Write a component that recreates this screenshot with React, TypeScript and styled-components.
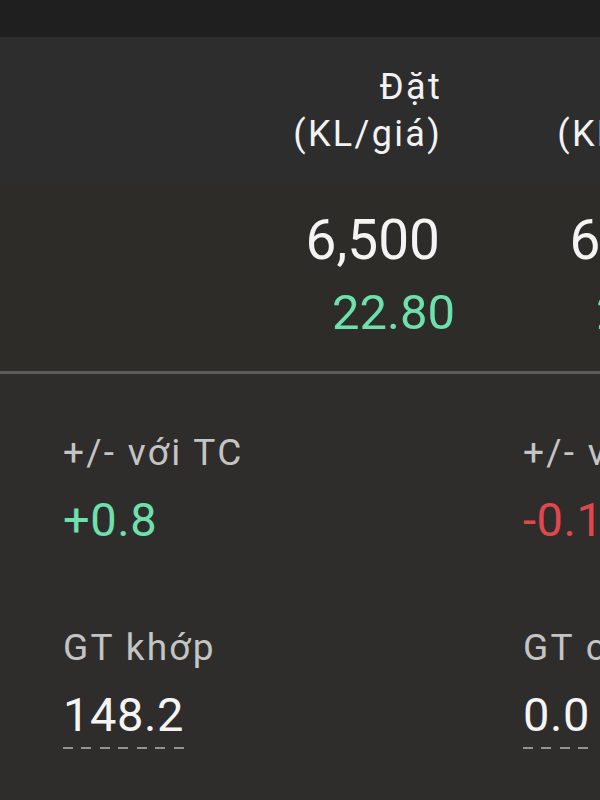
// App.tsx
import React from 'react';
import styled, { createGlobalStyle } from 'styled-components';

const GlobalStyle = createGlobalStyle`
  html, body {
    margin: 0;
    padding: 0;
    background: #2e2d2b;
  }
  body {
    font-family: Roboto, "Noto Sans", "Liberation Sans", sans-serif;
    -webkit-font-smoothing: antialiased;
  }
`;

const Screen = styled.div`
  width: 600px;
  height: 800px;
  overflow: hidden;
  display: flex;
  flex-direction: column;
  background: #2e2d2b;
`;

const StatusBar = styled.div`
  height: 37px;
  flex: none;
  background: #1f1f1f;
`;

const Board = styled.div`
  display: grid;
  grid-template-columns: 191px 264px 264px;
  width: 719px;
`;

const HeadCell = styled.div`
  height: 148px;
  padding: 27px 13px 0 0;
  box-sizing: border-box;
  background: #2d2d2d;
  color: #f2f2f2;
  font-size: 36px;
  line-height: 47px;
  letter-spacing: 2.3px;
  text-align: right;
  white-space: nowrap;
`;

const ValueCell = styled.div`
  height: 186px;
  padding-top: 23px;
  box-sizing: border-box;
  background: #2d2c29;
  display: flex;
  flex-direction: column;
  align-items: flex-end;
  gap: 11px;
  white-space: nowrap;
`;

const Volume = styled.div`
  padding-right: 15px;
  color: #f4f4f4;
  font-size: 55px;
  line-height: 64px;
`;

const Price = styled.div`
  color: #6ee0ad;
  font-size: 49px;
  line-height: 60px;
`;

const Divider = styled.div`
  height: 3px;
  flex: none;
  background: #5b5b5a;
`;

const Stats = styled.div`
  display: grid;
  grid-template-columns: 460px 460px;
  padding: 54px 0 0 63px;
  row-gap: 73px;
  white-space: nowrap;
`;

const Stat = styled.div`
  display: flex;
  flex-direction: column;
  align-items: flex-start;
  gap: 12px;
`;

const Label = styled.div`
  color: #c4c4c4;
  font-size: 37px;
  line-height: 50px;
  letter-spacing: 2.3px;
`;

const tones = {
  up: '#6ee0ad',
  down: '#e2474f',
  plain: '#f4f4f4',
};

const Value = styled.div<{ $tone: 'up' | 'down' | 'plain'; $dashed?: boolean }>`
  color: ${(p) => tones[p.$tone]};
  font-size: 47px;
  line-height: 60px;
  letter-spacing: 0.6px;
  padding-bottom: ${(p) => (p.$dashed ? '4px' : '0')};
  background-image: ${(p) =>
    p.$dashed
      ? 'repeating-linear-gradient(to right, #939393 0 10px, transparent 10px 18.5px)'
      : 'none'};
  background-size: 100% 2px;
  background-position: left bottom;
  background-repeat: no-repeat;
`;

const orders = [
  { volume: '6,500', price: '22.80' },
  { volume: '6,000', price: '22.80' },
];

const stats = [
  { label: '+/- với TC', value: '+0.8', tone: 'up' },
  { label: '+/- với TB', value: '-0.15', tone: 'down' },
  { label: 'GT khớp', value: '148.2', tone: 'plain', dashed: true },
  { label: 'GT chờ', value: '0.0', tone: 'plain', dashed: true },
] as const;

export default function App() {
  return (
    <>
      <GlobalStyle />
      <Screen>
        <StatusBar />
        <Board>
          <HeadCell />
          <HeadCell>
            Đặt
            <br />
            (KL/giá)
          </HeadCell>
          <HeadCell>
            Đặt
            <br />
            (KL/giá)
          </HeadCell>
          <ValueCell />
          {orders.map((o, i) => (
            <ValueCell key={i}>
              <Volume>{o.volume}</Volume>
              <Price>{o.price}</Price>
            </ValueCell>
          ))}
        </Board>
        <Divider />
        <Stats>
          {stats.map((s) => (
            <Stat key={s.label}>
              <Label>{s.label}</Label>
              <Value $tone={s.tone} $dashed={'dashed' in s && s.dashed}>
                {s.value}
              </Value>
            </Stat>
          ))}
        </Stats>
      </Screen>
    </>
  );
}
